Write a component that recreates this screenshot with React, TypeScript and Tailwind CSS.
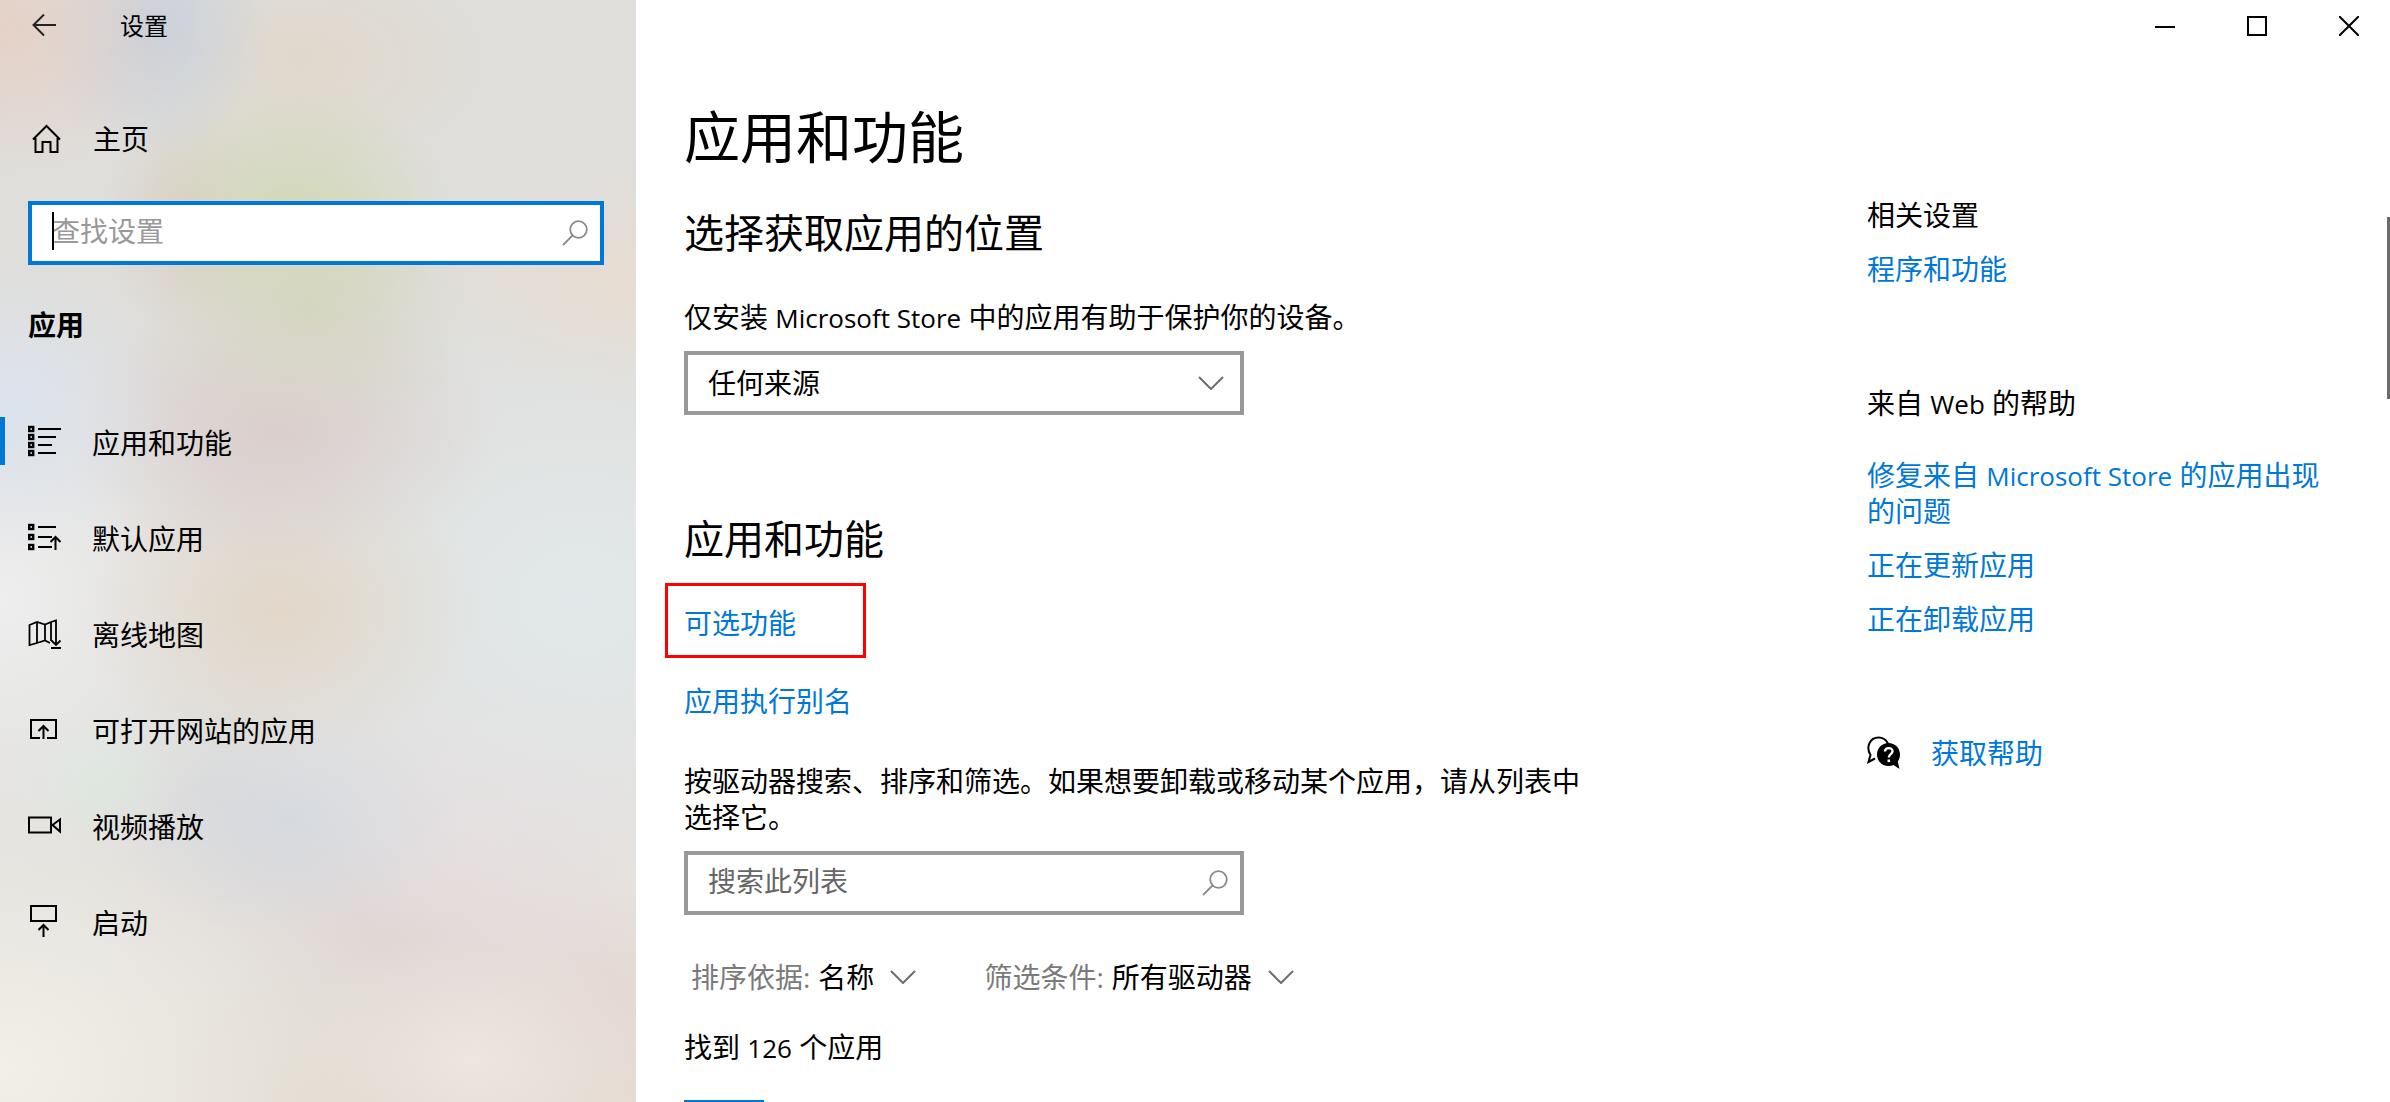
import type { ReactNode } from 'react';

type IconProps = { children: ReactNode };

function NavGlyph({ children }: IconProps) {
  return (
    <svg className="h-[34px] w-[34px] shrink-0" viewBox="0 0 34 34" fill="none" stroke="#000" strokeWidth="2" aria-hidden="true">
      {children}
    </svg>
  );
}

/* Latin words and digits run slightly smaller than the Chinese text around them. */
function Latin({ children }: { children: ReactNode }) {
  return <span className="text-[26px] leading-none">{children}</span>;
}

const navItems: { label: string; icon: ReactNode; active?: boolean }[] = [
  {
    label: '应用和功能',
    active: true,
    icon: (
      <NavGlyph>
        {[3, 11, 19, 27].map((y) => (
          <rect key={y} x="1.2" y={y} width="4" height="4" strokeWidth="2.4" />
        ))}
        <path d="M10 5h23M10 13h18M10 21h14M10 29h18" />
      </NavGlyph>
    ),
  },
  {
    label: '默认应用',
    icon: (
      <NavGlyph>
        {[5, 15, 25].map((y) => (
          <rect key={y} x="1.2" y={y} width="4" height="4" strokeWidth="2.4" />
        ))}
        <path d="M10 7h18M10 17h14M10 27h14" />
        <path d="M27.500 30V17.500M22.500 22l5-5 5 5" />
      </NavGlyph>
    ),
  },
  {
    label: '离线地图',
    icon: (
      <NavGlyph>
        <path d="M22 27l-5-2.500-8 2.500-7.500 2V9L9 6l8 2.500L23 6l5-1.500V16M9 6v21M17 8.500v16M23 6v19" strokeWidth="1.800" />
        <path d="M28 16v12.500M23.500 24.500l4.500 4.500 4.500-4.500" strokeWidth="1.800" />
        <path d="M23 32h10" />
      </NavGlyph>
    ),
  },
  {
    label: '可打开网站的应用',
    icon: (
      <NavGlyph>
        <path d="M12 26H3V8h25v18h-9M15.500 27V14.500M10.500 19l5-5 5 5" />
      </NavGlyph>
    ),
  },
  {
    label: '视频播放',
    icon: (
      <NavGlyph>
        <path d="M1 9.500h22v15H1zM24.500 17l7.500-5.500v12z" />
      </NavGlyph>
    ),
  },
  {
    label: '启动',
    icon: (
      <NavGlyph>
        <path d="M3 2h25v15H3zM15.500 33V21.500M10.500 26l5-5 5 5" />
      </NavGlyph>
    ),
  },
];

function SearchIcon() {
  return (
    <svg className="pointer-events-none absolute right-4 top-1/2 h-[26px] w-[26px] -translate-y-1/2" viewBox="0 0 26 26" fill="none" stroke="#8a8a8a" strokeWidth="1.800" aria-hidden="true">
      <circle cx="16.500" cy="9.500" r="8.300" />
      <path d="M10.500 15.500L1 25" />
    </svg>
  );
}

function Chevron({ className }: { className: string }) {
  return (
    <svg className={className} viewBox="0 0 26 14" fill="none" stroke="#6e6e6e" strokeWidth="2" aria-hidden="true">
      <path d="M1 1l12 12L25 1" />
    </svg>
  );
}

const webHelp: { key: string; text: ReactNode }[] = [
  { key: 'repair', text: <>修复来自 <Latin>Microsoft Store</Latin> 的应用出现的问题</> },
  { key: 'update', text: '正在更新应用' },
  { key: 'uninstall', text: '正在卸载应用' },
];

function Sidebar() {
  return (
    <aside className="flex w-[636px] shrink-0 flex-col bg-[#dfdedb] bg-[radial-gradient(190px_150px_at_0px_30px,#e5d1c7,transparent),radial-gradient(120px_130px_at_150px_30px,#c8d0dc,transparent),radial-gradient(160px_130px_at_295px_210px,#d2d8b8,transparent),radial-gradient(170px_130px_at_310px_310px,#d6d5c3,transparent),radial-gradient(200px_120px_at_300px_60px,#e0d8cc,transparent),radial-gradient(90px_120px_at_190px_220px,#dacfc6,transparent),radial-gradient(160px_150px_at_10px_410px,#dce3ed,transparent),radial-gradient(230px_120px_at_640px_280px,#e7dcd1,transparent),radial-gradient(220px_140px_at_280px_430px,#dacecc,transparent),radial-gradient(200px_150px_at_280px_610px,#e2d7c9,transparent),radial-gradient(260px_280px_at_0px_600px,#eeeeee,transparent),radial-gradient(420px_360px_at_580px_600px,#e2e8e9,transparent),radial-gradient(80px_70px_at_100px_775px,#d9e5dc,transparent),radial-gradient(180px_120px_at_290px_820px,#d5d9df,transparent),radial-gradient(260px_170px_at_480px_820px,#e8dcdd,transparent),radial-gradient(180px_130px_at_470px_1060px,#ede5df,transparent),radial-gradient(420px_320px_at_0px_1070px,#f2efe7,transparent),radial-gradient(280px_150px_at_330px_1102px,#dfd7cc,transparent),radial-gradient(200px_140px_at_600px_1010px,#e4d8d5,transparent),radial-gradient(200px_200px_at_636px_1102px,#e6dccf,transparent),radial-gradient(300px_200px_at_370px_930px,#dfd6d3,transparent),radial-gradient(300px_240px_at_636px_880px,#e8e4dc,transparent)]">
      <header className="flex h-[52px] items-center pl-8">
        <button type="button" aria-label="返回" className="flex h-12 w-[88px] items-center">
          <svg className="h-6 w-6" viewBox="0 0 24 24" fill="none" stroke="#222" strokeWidth="2" aria-hidden="true">
            <path d="M24 11H1.500M12 .5L1.500 11 12 21.500" />
          </svg>
        </button>
        <span className="text-[24px]">设置</span>
      </header>

      <button type="button" className="mt-[63px] flex h-12 items-center gap-[31px] pl-8 text-left">
        <svg className="h-[30px] w-[30px]" viewBox="0 0 30 30" fill="none" stroke="#000" strokeWidth="2" aria-hidden="true">
          <path d="M1 15.500L14.500 2 28 15.500M3.500 14v14h7v-10h8v10h7V14" />
        </svg>
        <span>主页</span>
      </button>

      <div className="relative mt-[38px] ml-7 mr-8">
        <input
          type="text"
          aria-label="查找设置"
          placeholder="查找设置"
          className="h-16 w-full border-4 border-[#0078d7] bg-white pb-1 pl-5 pr-14 outline-none placeholder:text-[#999]"
        />
        <span className="absolute left-6 top-[11px] h-[38px] w-0.5 bg-black" />
        <SearchIcon />
      </div>

      <h2 className="mt-[42px] pl-7 font-bold">应用</h2>

      <nav className="mt-[74px] flex flex-col gap-12">
        {navItems.map((item) => (
          <a
            key={item.label}
            href="#"
            aria-current={item.active ? 'page' : undefined}
            className={
              item.active
                ? 'flex h-12 items-center gap-[30px] border-l-[5px] border-[#0078d7] pl-[23px]'
                : 'flex h-12 items-center gap-[30px] pl-7'
            }
          >
            {item.icon}
            <span className="pt-1">{item.label}</span>
          </a>
        ))}
      </nav>
    </aside>
  );
}

export default function App() {
  return (
    <div className="relative flex h-screen overflow-hidden bg-white font-['Open_Sans','Noto_Sans_CJK_SC',sans-serif] text-[28px] leading-9 text-black">
      <Sidebar />

      <div className="flex min-w-0 flex-1 flex-col">
        <header className="flex h-[52px] shrink-0 justify-end gap-3 pr-px">
          <button type="button" aria-label="最小化" className="flex w-20 items-center justify-center">
            <svg className="h-5 w-5" viewBox="0 0 20 20" stroke="#000" strokeWidth="2" aria-hidden="true">
              <path d="M0 11h20" />
            </svg>
          </button>
          <button type="button" aria-label="最大化" className="flex w-20 items-center justify-center">
            <svg className="h-5 w-5" viewBox="0 0 20 20" fill="none" stroke="#000" strokeWidth="2" aria-hidden="true">
              <rect x="1" y="1" width="18" height="18" />
            </svg>
          </button>
          <button type="button" aria-label="关闭" className="flex w-20 items-center justify-center">
            <svg className="h-5 w-5" viewBox="0 0 20 20" stroke="#000" strokeWidth="2" aria-hidden="true">
              <path d="M0 0l20 20M20 0L0 20" />
            </svg>
          </button>
        </header>

        <div className="flex justify-between pl-12">
          <main className="flex max-w-[900px] flex-col">
            <h1 className="mt-12 text-[56px] leading-[72px]">应用和功能</h1>

            <h2 className="mt-[35px] text-[40px] leading-[52px]">选择获取应用的位置</h2>
            <label htmlFor="source" className="mt-10">
              仅安装 <Latin>Microsoft Store</Latin> 中的应用有助于保护你的设备。
            </label>
            <div className="relative mt-4 w-[560px]">
              <select id="source" className="h-16 w-full appearance-none border-4 border-[#999] bg-white pl-5 pr-16">
                <option>任何来源</option>
              </select>
              <Chevron className="pointer-events-none absolute right-5 top-1/2 h-[14px] w-[26px] -translate-y-1/2" />
            </div>

            <h2 className="mt-[98px] text-[40px] leading-[52px]">应用和功能</h2>
            <div className="-ml-[19px] mt-[18px] flex h-[75px] w-[201px] items-center border-[3px] border-[#ff0000] pl-4 pt-1">
              <a href="#" className="text-[#0078d7]">可选功能</a>
            </div>
            <a href="#" className="mt-[25px] self-start text-[#0078d7]">应用执行别名</a>

            <label htmlFor="list-search" className="mt-11">
              按驱动器搜索、排序和筛选。如果想要卸载或移动某个应用，请从列表中选择它。
            </label>
            <div className="relative mt-4 w-[560px]">
              <input
                id="list-search"
                type="text"
                placeholder="搜索此列表"
                className="h-16 w-full border-4 border-[#999] bg-white pb-1 pl-5 pr-16 placeholder:text-[#666]"
              />
              <SearchIcon />
            </div>

            <div className="mt-11 flex gap-[68px] pl-[7px]">
              <div className="flex items-center">
                <label htmlFor="sort" className="text-[#7a7a7a]">排序依据:</label>
                <select id="sort" className="ml-2 appearance-none bg-white [field-sizing:content]">
                  <option>名称</option>
                </select>
                <Chevron className="ml-4 h-[14px] w-[26px]" />
              </div>
              <div className="flex items-center">
                <label htmlFor="filter" className="text-[#7a7a7a]">筛选条件:</label>
                <select id="filter" className="ml-2 appearance-none bg-white [field-sizing:content]">
                  <option>所有驱动器</option>
                </select>
                <Chevron className="ml-4 h-[14px] w-[26px]" />
              </div>
            </div>

            <p className="mt-[34px]">找到 <Latin>126</Latin> 个应用</p>
            <div className="mt-[35px] h-20 w-20 bg-[#0078d7]" />
          </main>

          <aside className="flex w-[523px] shrink-0 flex-col items-start pr-14">
            <h3 className="mt-[145px]">相关设置</h3>
            <a href="#" className="mt-[18px] text-[#0078d7]">程序和功能</a>

            <h3 className="mt-[98px]">来自 <Latin>Web</Latin> 的帮助</h3>
            <div className="mt-9 flex flex-col gap-[18px]">
              {webHelp.map((item) => (
                <a key={item.key} href="#" className="text-[#0078d7]">{item.text}</a>
              ))}
            </div>

            <a href="#" className="mt-[98px] flex items-center gap-[30px] text-[#0078d7]">
              <svg className="h-[34px] w-[34px]" viewBox="0 0 34 34" aria-hidden="true">
                <path
                  d="M8 22.500L1.500 26l2-7C-1.500 11 3 1.500 11.500 1.500c4.500 0 7.500 2 9.500 6"
                  fill="none"
                  stroke="#000"
                  strokeWidth="2"
                />
                <path d="M21.500 7C15 7 10 12 10 18.500S15 30 21.500 30c1.800 0 3.500-.4 5-1.100L32.500 33l-1.700-7.500c1.400-2 2.200-4.400 2.200-7C33 12 28 7 21.500 7z" fill="#000" />
                <path d="M18 15.500c0-4.500 7.500-4.500 7.500-.3 0 3-3.700 3-3.700 6.300" fill="none" stroke="#fff" strokeWidth="2.400" />
                <rect x="20.500" y="23.500" width="2.600" height="2.600" fill="#fff" />
              </svg>
              获取帮助
            </a>
          </aside>
        </div>
      </div>

      <div className="absolute right-0 top-[217px] h-[182px] w-[3px] bg-[#6b6b6b]" />
    </div>
  );
}
